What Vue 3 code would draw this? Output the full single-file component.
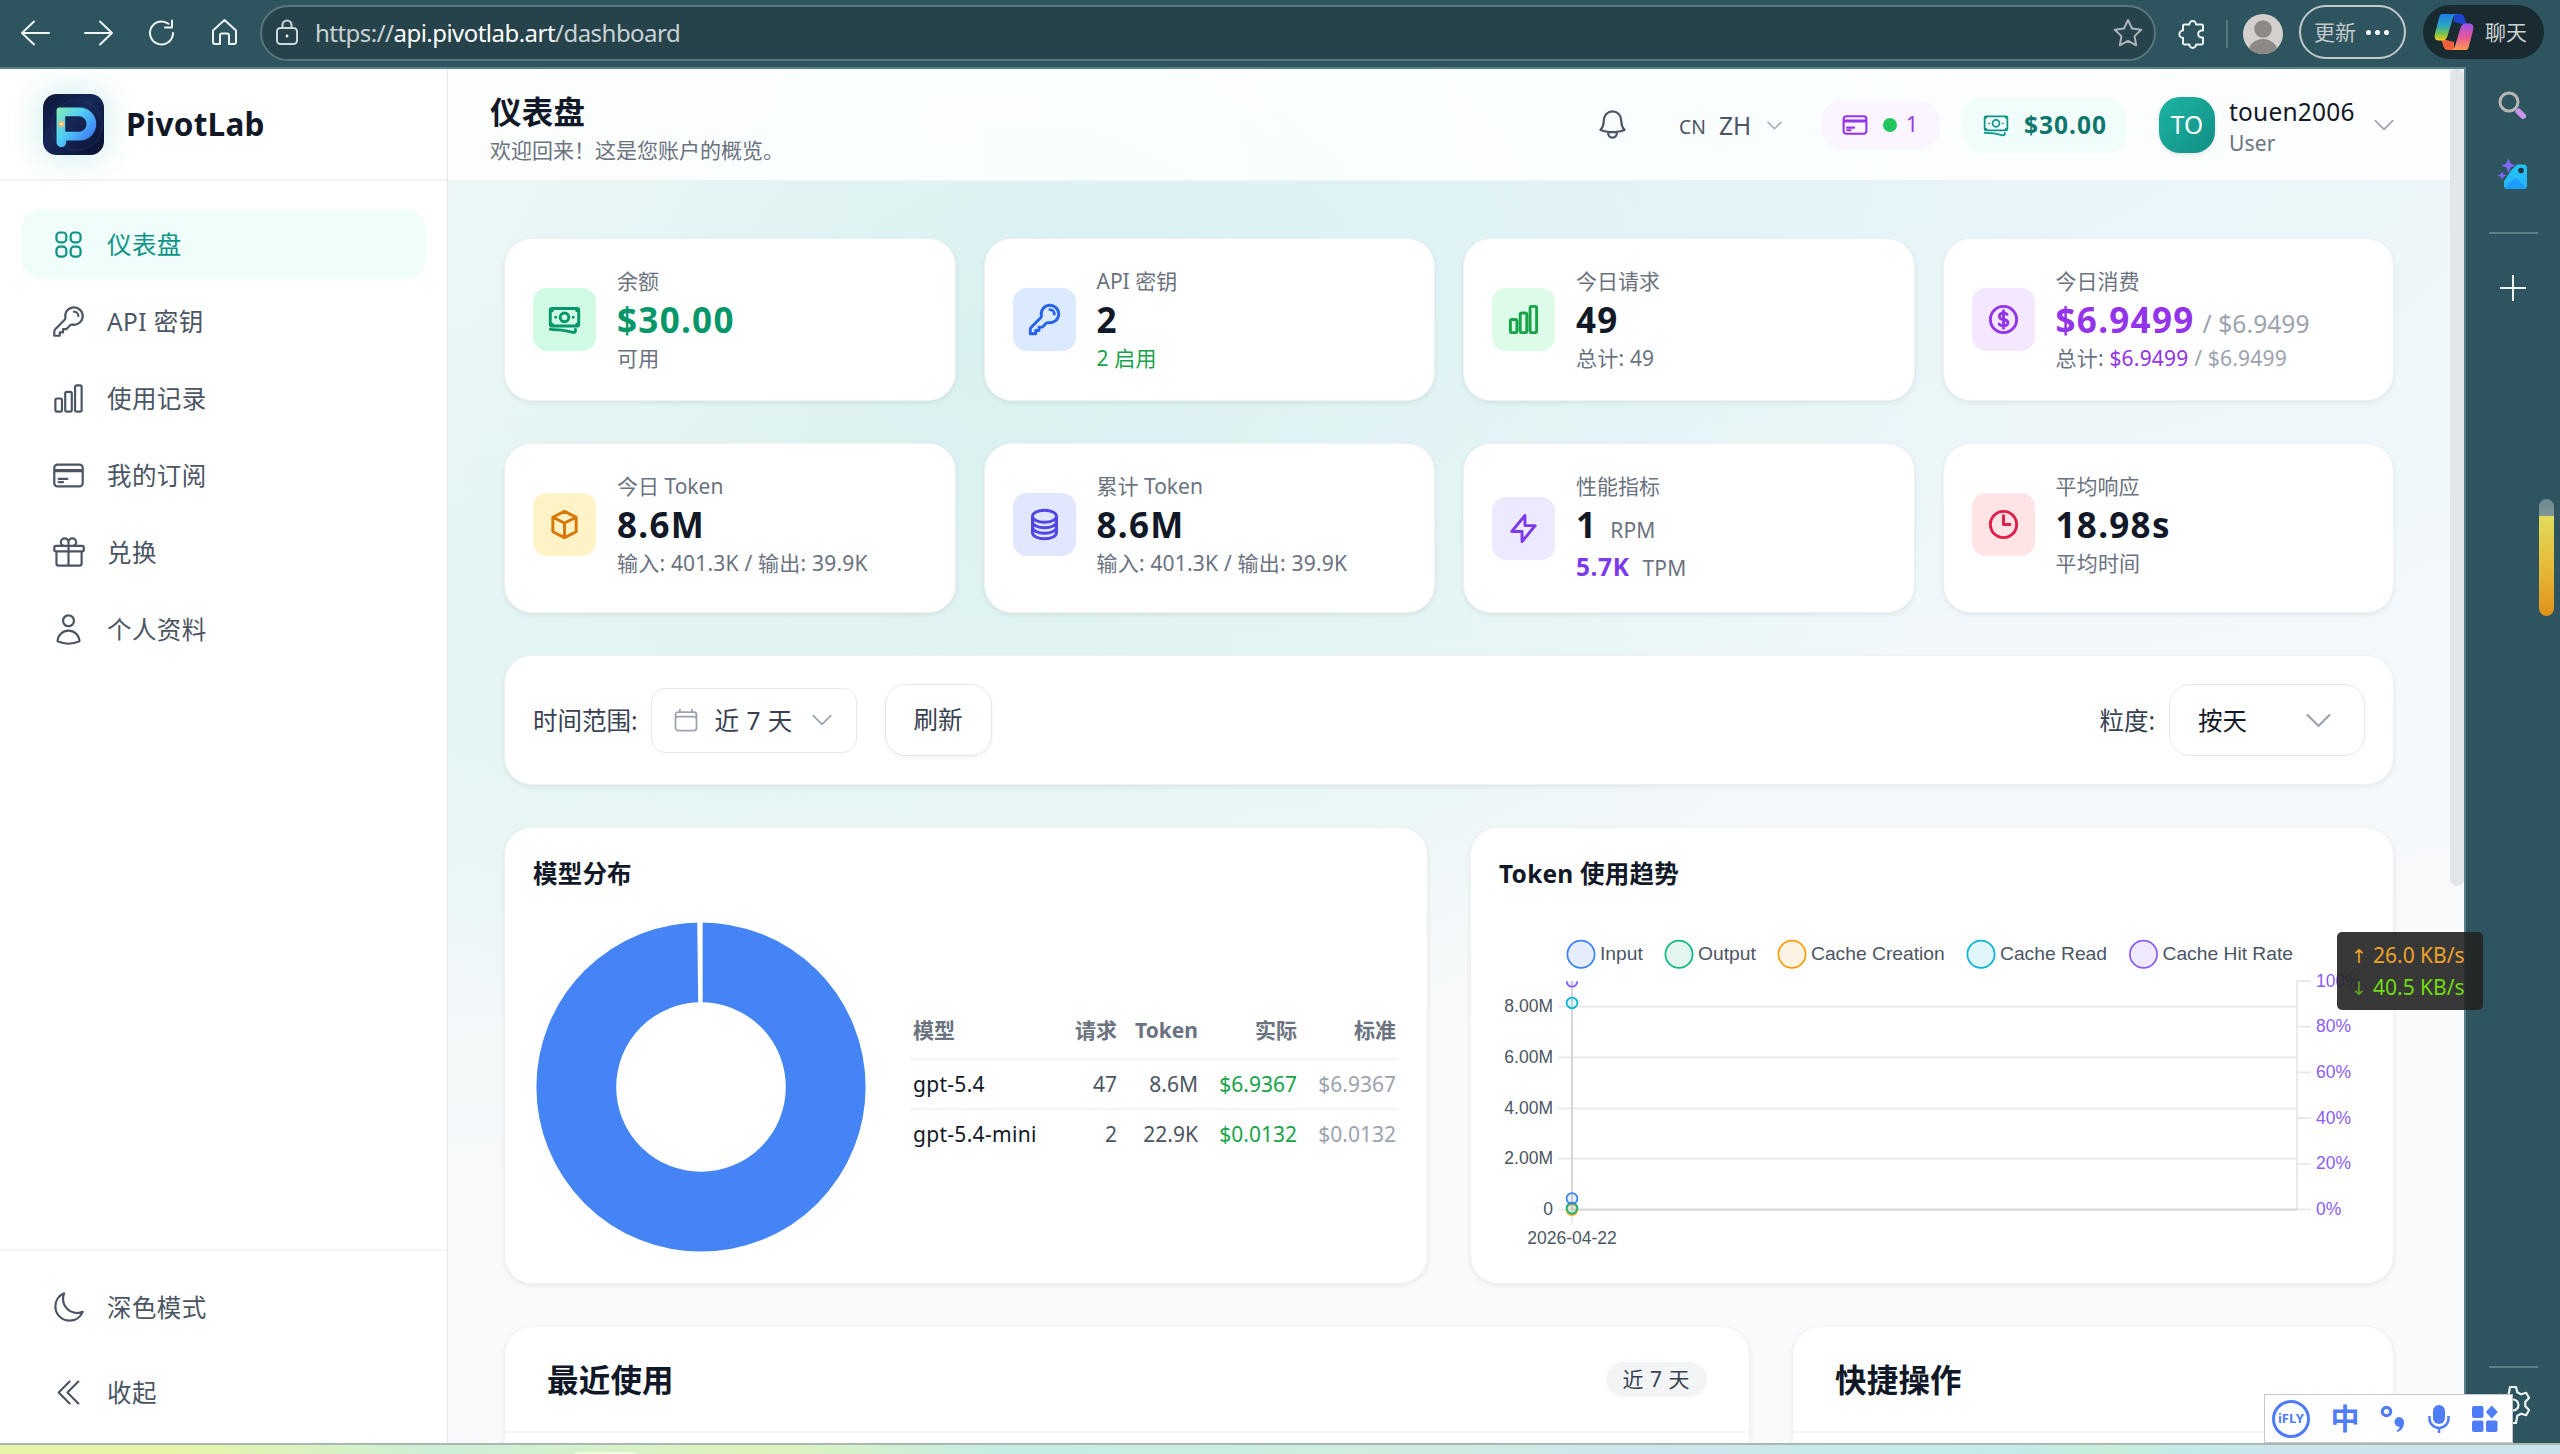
<script setup>
import { h } from 'vue'

const paths = {
  grid: 'M3.75 6A2.25 2.25 0 016 3.75h2.25A2.25 2.25 0 0110.5 6v2.25a2.25 2.25 0 01-2.25 2.25H6a2.25 2.25 0 01-2.25-2.25V6zM3.75 15.75A2.25 2.25 0 016 13.5h2.25a2.25 2.25 0 012.25 2.25V18a2.25 2.25 0 01-2.25 2.25H6A2.25 2.25 0 013.75 18v-2.25zM13.5 6a2.25 2.25 0 012.25-2.25H18A2.25 2.25 0 0120.25 6v2.25A2.25 2.25 0 0118 10.5h-2.25a2.25 2.25 0 01-2.25-2.25V6zM13.5 15.75a2.25 2.25 0 012.25-2.25H18a2.25 2.25 0 012.25 2.25V18A2.25 2.25 0 0118 20.25h-2.25A2.25 2.25 0 0113.5 18v-2.25z',
  key: 'M15.75 5.25a3 3 0 013 3m3 0a6 6 0 01-7.029 5.912c-.563-.097-1.159.026-1.563.43L10.5 17.25H8.25v2.25H6v2.25H2.25v-2.818c0-.597.237-1.17.659-1.591l6.499-6.499c.404-.404.527-1 .43-1.563A6 6 0 1121.75 8.25z',
  bars: 'M3 13.125C3 12.504 3.504 12 4.125 12h2.25c.621 0 1.125.504 1.125 1.125v6.75C7.5 20.496 6.996 21 6.375 21h-2.25A1.125 1.125 0 013 19.875v-6.75zM9.75 8.625c0-.621.504-1.125 1.125-1.125h2.25c.621 0 1.125.504 1.125 1.125v11.25c0 .621-.504 1.125-1.125 1.125h-2.25a1.125 1.125 0 01-1.125-1.125V8.625zM16.5 4.125c0-.621.504-1.125 1.125-1.125h2.25C20.496 3 21 3.504 21 4.125v15.75c0 .621-.504 1.125-1.125 1.125h-2.25a1.125 1.125 0 01-1.125-1.125V4.125z',
  card: 'M2.25 8.25h19.5M2.25 9h19.5m-16.5 5.25h6m-6 2.25h3m-3.75 3h15a2.25 2.25 0 002.25-2.25V6.75A2.25 2.25 0 0019.5 4.5h-15a2.25 2.25 0 00-2.25 2.25v10.5A2.25 2.25 0 004.5 19.5z',
  gift: 'M21 11.25v8.25a1.5 1.5 0 01-1.5 1.5H5.25a1.5 1.5 0 01-1.5-1.5v-8.25M12 4.875A2.625 2.625 0 109.375 7.5H12m0-2.625V7.5m0-2.625A2.625 2.625 0 1114.625 7.5H12m0 0V21m-8.625-9.75h18c.621 0 1.125-.504 1.125-1.125v-1.5c0-.621-.504-1.125-1.125-1.125h-18c-.621 0-1.125.504-1.125 1.125v1.5c0 .621.504 1.125 1.125 1.125z',
  user: 'M15.75 6a3.75 3.75 0 11-7.5 0 3.75 3.75 0 017.5 0zM4.501 20.118a7.5 7.5 0 0114.998 0A17.933 17.933 0 0112 21.75c-2.676 0-5.216-.584-7.499-1.632z',
  moon: 'M21.752 15.002A9.718 9.718 0 0118 15.75c-5.385 0-9.75-4.365-9.75-9.75 0-1.33.266-2.597.748-3.752A9.753 9.753 0 003 11.25C3 16.635 7.365 21 12.75 21a9.753 9.753 0 009.002-5.998z',
  collapse: 'M18.75 19.5l-7.5-7.5 7.5-7.5m-6 15L5.25 12l7.5-7.5',
  bell: 'M14.857 17.082a23.848 23.848 0 005.454-1.31A8.967 8.967 0 0118 9.75v-.7V9A6 6 0 006 9v.75a8.967 8.967 0 01-2.312 6.022c1.733.64 3.56 1.085 5.455 1.31m5.714 0a24.255 24.255 0 01-5.714 0m5.714 0a3 3 0 11-5.714 0',
  cash: 'M2.25 18.75a60.07 60.07 0 0115.797 2.101c.727.198 1.453-.342 1.453-1.096V18.75M3.75 4.5v.75A.75.75 0 013 6h-.75m0 0v-.375c0-.621.504-1.125 1.125-1.125H20.25M2.25 6v9m18-10.5v.75c0 .414.336.75.75.75h.75m-1.5-1.5h.375c.621 0 1.125.504 1.125 1.125v9.75c0 .621-.504 1.125-1.125 1.125h-.375m1.5-1.5H21a.75.75 0 00-.75.75v.75m0 0H3.75m0 0h-.375a1.125 1.125 0 01-1.125-1.125V15m1.5 1.5v-.75A.75.75 0 003 15h-.75M15 10.5a3 3 0 11-6 0 3 3 0 016 0zm3 0h.008v.008H18V10.5zm-12 0h.008v.008H6V10.5z',
  dollar: 'M12 6v12m-3-2.818l.879.659c1.171.879 3.07.879 4.242 0 1.172-.879 1.172-2.303 0-3.182C13.536 12.219 12.768 12 12 12c-.725 0-1.45-.22-2.003-.659-1.106-.879-1.106-2.303 0-3.182s2.9-.879 4.006 0l.415.33M21 12a9 9 0 11-18 0 9 9 0 0118 0z',
  cube: 'M20 7l-8-4-8 4m16 0l-8 4m8-4v10l-8 4m0-10L4 7m8 4v10M4 7v10l8 4',
  stack: 'M20.25 6.375c0 2.278-3.694 4.125-8.25 4.125S3.75 8.653 3.75 6.375m16.5 0c0-2.278-3.694-4.125-8.25-4.125S3.75 4.097 3.75 6.375m16.5 0v11.25c0 2.278-3.694 4.125-8.25 4.125s-8.25-1.847-8.25-4.125V6.375m16.5 0v3.75m-16.5-3.75v3.75m16.5 0v3.75C20.25 16.153 16.556 18 12 18s-8.25-1.847-8.25-4.125v-3.75m16.5 0c0 2.278-3.694 4.125-8.25 4.125s-8.25-1.847-8.25-4.125',
  bolt: 'M13 10V3L4 14h7v7l9-11h-7z',
  clock: 'M12 6v6h4.5m4.5 0a9 9 0 11-18 0 9 9 0 0118 0z',
  down: 'M19.5 8.25l-7.5 7.5-7.5-7.5',
  calendar: 'M6.75 3v2.25M17.25 3v2.25M3 18.75V7.5a2.25 2.25 0 012.25-2.25h13.5A2.25 2.25 0 0121 7.5v11.25m-18 0A2.25 2.25 0 005.25 21h13.5A2.25 2.25 0 0021 18.75m-18 0v-7.5A2.25 2.25 0 015.25 9h13.5A2.25 2.25 0 0121 11.25v7.5'
}

const Icon = (props) =>
  h('svg', {
    width: props.size || 35,
    height: props.size || 35,
    viewBox: '0 0 24 24',
    fill: 'none',
    stroke: 'currentColor',
    'stroke-width': props.weight || 1.5,
    'stroke-linecap': 'round',
    'stroke-linejoin': 'round'
  }, [h('path', { d: paths[props.name] })])
Icon.props = ['name', 'size', 'weight']

const nav = [
  { icon: 'grid', label: '仪表盘', active: true },
  { icon: 'key', label: 'API 密钥' },
  { icon: 'bars', label: '使用记录' },
  { icon: 'card', label: '我的订阅' },
  { icon: 'gift', label: '兑换' },
  { icon: 'user', label: '个人资料' }
]

const stats = [
  { icon: 'cash', tone: 'emerald', label: '余额', value: '$30.00', valueTone: 'v-emerald', sub: '可用' },
  { icon: 'key', tone: 'blue', label: 'API 密钥', value: '2', sub: '2 启用', subTone: 's-green' },
  { icon: 'bars', tone: 'green', label: '今日请求', value: '49', sub: '总计: 49' },
  { icon: 'dollar', tone: 'purple', label: '今日消费', value: '$6.9499', valueTone: 'v-purple', aside: '/ $6.9499', sub: '总计: ', cost: '$6.9499', costAside: ' / $6.9499' },
  { icon: 'cube', tone: 'amber', label: '今日 Token', value: '8.6M', sub: '输入: 401.3K / 输出: 39.9K' },
  { icon: 'stack', tone: 'indigo', label: '累计 Token', value: '8.6M', sub: '输入: 401.3K / 输出: 39.9K' },
  { icon: 'bolt', tone: 'violet', label: '性能指标', value: '1', unit: 'RPM', value2: '5.7K', unit2: 'TPM' },
  { icon: 'clock', tone: 'rose', label: '平均响应', value: '18.98s', sub: '平均时间' }
]

const models = [
  { name: 'gpt-5.4', req: '47', token: '8.6M', actual: '$6.9367', std: '$6.9367' },
  { name: 'gpt-5.4-mini', req: '2', token: '22.9K', actual: '$0.0132', std: '$0.0132' }
]

const legend = [
  { x: 82, label: 'Input', stroke: '#3b82f6', fill: '#e6eefd' },
  { x: 180, label: 'Output', stroke: '#10b981', fill: '#e2f5ee' },
  { x: 293, label: 'Cache Creation', stroke: '#f59e0b', fill: '#fef2e4' },
  { x: 482, label: 'Cache Read', stroke: '#06b6d4', fill: '#e1f6fa' },
  { x: 644.5, label: 'Cache Hit Rate', stroke: '#8b5cf6', fill: '#f0eafe' }
]
const yTicks = [['8.00M', 107], ['6.00M', 157.8], ['4.00M', 208.8], ['2.00M', 259.2], ['0', 310]]
const pctTicks = ['100%', '80%', '60%', '40%', '20%', '0%'].map((t, i) => [t, 81.5 + i * 45.7])
</script>

<template>
  <div class="desktop">
    <header class="toolbar">
      <svg class="nav-icons" width="260" height="67" viewBox="0 0 260 67" fill="none" stroke="#eef3f4" stroke-width="2" stroke-linecap="round" stroke-linejoin="round">
        <path d="M49 33H22M34 21.500L22 33l12 11.500" />
        <path d="M85 33h27M100 21.500L112 33l-12 11.500" />
        <path d="M173 33a11.500 11.500 0 1 1-4.500-9.200M172 20.500v7h-7" />
        <path d="M213 30.500L224.500 20 236 30.500V42a2 2 0 0 1-2 2h-5v-8.500a2 2 0 0 0-2-2h-5a2 2 0 0 0-2 2V44h-5a2 2 0 0 1-2-2z" />
      </svg>
      <div class="address">
        <svg width="24" height="28" viewBox="0 0 24 28" fill="none" stroke="#cdd6d8" stroke-width="2">
          <rect x="2" y="9" width="20" height="16" rx="3.500" /><path d="M7.500 9V6a4.500 4.500 0 0 1 9 0v3" /><circle cx="12" cy="17" r="1.400" fill="#fff" stroke="none" />
        </svg>
        <span class="url">https://<b>api.pivotlab.art</b>/dashboard</span>
        <svg class="star" width="30" height="30" viewBox="0 0 30 30" fill="none" stroke="#a9b5b8" stroke-width="2" stroke-linejoin="round"><path d="M15 2l4 8.500 9.200 1.200-6.700 6.400 1.700 9.200L15 22.800l-8.200 4.500 1.700-9.200L1.800 11.700 11 10.500z" /></svg>
      </div>
      <svg class="puzzle" width="30" height="32" viewBox="0 0 30 32" fill="none" stroke="#eef3f4" stroke-width="2" stroke-linejoin="round"><path d="M7.500 6.500h4.800a3.400 3.400 0 0 1 6.800 0h5.400a1.500 1.500 0 0 1 1.500 1.500v4.500h-1.300a3.500 3.500 0 0 0 0 7H26V25a1.500 1.500 0 0 1-1.500 1.500h-5.400a3.400 3.400 0 0 1-6.800 0H7.500A1.500 1.500 0 0 1 6 25v-5.200a3.600 3.600 0 0 1 0-7.200V8a1.500 1.500 0 0 1 1.500-1.500z" /></svg>
      <i class="tool-divider"></i>
      <svg class="person" width="40" height="40" viewBox="0 0 40 40">
        <defs><clipPath id="person-clip"><circle cx="20" cy="20" r="20" /></clipPath></defs>
        <g clip-path="url(#person-clip)"><rect width="40" height="40" fill="#d4d0ce" /><circle cx="20" cy="15" r="8.800" fill="#8c8987" /><ellipse cx="20" cy="38" rx="14.500" ry="13" fill="#8c8987" /></g>
      </svg>
      <div class="update"><span>更新</span><i></i><i></i><i></i></div>
      <div class="chat">
        <svg width="40" height="38" viewBox="0 0 40 38">
          <defs>
            <linearGradient id="cop-a" x1="0" y1="0" x2="0" y2="1"><stop offset="0" stop-color="#1f7ee8" /><stop offset=".45" stop-color="#2ba6c0" /><stop offset=".75" stop-color="#7cc24a" /><stop offset="1" stop-color="#f4d020" /></linearGradient>
            <linearGradient id="cop-b" x1="0" y1="0" x2="0" y2="1"><stop offset="0" stop-color="#9a55e8" /><stop offset=".5" stop-color="#e5559c" /><stop offset="1" stop-color="#ff9a4a" /></linearGradient>
          </defs>
          <path d="M20 1h6c3 0 4 2 5 5l1.500 5H28l-8-2z" fill="#1c44cf" />
          <path d="M20 37h-6c-3 0-4-2-5-5l-1.500-5H12l8 2z" fill="#f0603c" />
          <path d="M8 1h14.500c-2.500 1-3.300 3-4 5.500L13.500 23c-1 3-2.500 4.500-5 4.500H4.500c-3.500 0-4.500-3-3.500-7L4.500 7C5.500 3 6 1 8 1z" fill="url(#cop-a)" />
          <path d="M32 37H17.500c2.500-1 3.300-3 4-5.500L26.500 15c1-3 2.500-4.500 5-4.500h4c3.500 0 4.500 3 3.500 7L35.500 31c-1 4-1.500 6-3.500 6z" fill="url(#cop-b)" />
        </svg>
        <span>聊天</span>
      </div>
    </header>

    <div class="body">
      <div class="page">
        <aside class="sidebar">
          <div class="brand">
            <div class="logo">
              <svg width="61" height="61" viewBox="0 0 63 63">
                <defs>
                  <linearGradient id="logo-bg" x1="0" y1="0" x2="1" y2="1"><stop offset="0" stop-color="#0d1638" /><stop offset=".45" stop-color="#162857" /><stop offset="1" stop-color="#0a1030" /></linearGradient>
                  <linearGradient id="logo-p" x1="0" y1="0" x2="1" y2=".8"><stop offset="0" stop-color="#86efb4" /><stop offset=".45" stop-color="#50cdf5" /><stop offset="1" stop-color="#3b6cf6" /></linearGradient>
                </defs>
                <rect width="63" height="63" rx="14" fill="url(#logo-bg)" />
                <circle cx="35" cy="32" r="26" fill="none" stroke="#2a4278" stroke-opacity=".45" />
                <path d="M17 14h21a16.500 16.500 0 0 1 0 34H24v2a5 5 0 0 1-10 0V17a3 3 0 0 1 3-3zm6 9v16h14a8 8 0 0 0 0-16z" fill="url(#logo-p)" fill-rule="evenodd" />
                <circle cx="19" cy="31" r="3.200" fill="#f5b464" /><circle cx="19" cy="31" r="1.400" fill="#fff3d8" />
              </svg>
            </div>
            <span class="brand-name">PivotLab</span>
          </div>
          <nav class="nav">
            <a v-for="n in nav" :key="n.label" :class="['nav-item', { active: n.active }]"><Icon :name="n.icon" /><span>{{ n.label }}</span></a>
          </nav>
          <div class="side-foot">
            <a class="nav-item"><Icon name="moon" /><span>深色模式</span></a>
            <a class="nav-item"><Icon name="collapse" /><span>收起</span></a>
          </div>
        </aside>

        <main class="main">
          <div class="topbar">
            <div class="heading">
              <h1>仪表盘</h1>
              <p>欢迎回来！这是您账户的概览。</p>
            </div>
            <Icon class="bell" name="bell" />
            <div class="lang"><small>CN</small><span>ZH</span><Icon name="down" size="21" /></div>
            <div class="pill subs"><Icon name="card" size="28" weight="1.800" /><i class="dot"></i><span>1</span></div>
            <div class="pill funds"><Icon name="cash" size="28" /><span>$30.00</span></div>
            <div class="profile">
              <div class="avatar">TO</div>
              <div class="who"><span>touen2006</span><small>User</small></div>
              <Icon name="down" size="28" />
            </div>
          </div>

          <div class="content">
            <section class="stats">
              <div v-for="s in stats" :key="s.label" class="card stat">
                <div class="stat-row">
                  <div :class="['tile', s.tone]"><Icon :name="s.icon" weight="2" /></div>
                  <div>
                    <div class="label">{{ s.label }}</div>
                    <div :class="['value', s.valueTone]">{{ s.value }}<span v-if="s.aside" class="aside">{{ s.aside }}</span><span v-if="s.unit" class="unit">{{ s.unit }}</span></div>
                    <div v-if="s.value2" class="value2">{{ s.value2 }}<span class="unit">{{ s.unit2 }}</span></div>
                    <div v-else :class="['sub', s.subTone]">{{ s.sub }}<span class="cost">{{ s.cost }}</span><span class="muted">{{ s.costAside }}</span></div>
                  </div>
                </div>
              </div>
            </section>

            <section class="card controls">
              <span class="ctl-label">时间范围:</span>
              <div class="picker"><Icon name="calendar" size="28" /><span>近 7 天</span><Icon name="down" size="28" /></div>
              <div class="refresh">刷新</div>
              <span class="ctl-label push">粒度:</span>
              <div class="select"><span>按天</span><Icon name="down" /></div>
            </section>

            <section class="charts">
              <div class="card chart">
                <h3>模型分布</h3>
                <div class="split">
                  <svg width="336" height="336" viewBox="0 0 336 336">
                    <circle cx="168" cy="168" r="124.700" fill="none" stroke="#4484f4" stroke-width="79.800" />
                    <path d="M164.200 0h5.400v84h-4.400z" fill="#fff" />
                  </svg>
                  <table>
                    <thead><tr><th>模型</th><th>请求</th><th>Token</th><th>实际</th><th>标准</th></tr></thead>
                    <tbody>
                      <tr v-for="m in models" :key="m.name"><td>{{ m.name }}</td><td>{{ m.req }}</td><td>{{ m.token }}</td><td>{{ m.actual }}</td><td>{{ m.std }}</td></tr>
                    </tbody>
                  </table>
                </div>
              </div>
              <div class="card chart">
                <h3>Token 使用趋势</h3>
                <svg class="plot" width="866" height="336" viewBox="0 19.500 866 336">
                  <g v-for="l in legend" :key="l.label">
                    <circle :cx="l.x" cy="54.700" r="13.600" :fill="l.fill" :stroke="l.stroke" stroke-width="1.750" />
                    <text :x="l.x + 19" y="60.700" font-size="19.250" fill="#4b5563">{{ l.label }}</text>
                  </g>
                  <g v-for="t in yTicks" :key="t[0]">
                    <path :d="`M59 ${t[1]}H798`" stroke="#e5e7eb" stroke-width="1.750" />
                    <text x="54" :y="t[1] + 5.500" font-size="17.500" text-anchor="end" fill="#4b5563">{{ t[0] }}</text>
                  </g>
                  <path d="M798 81v229" stroke="#e5e7eb" stroke-width="1.750" />
                  <g v-for="t in pctTicks" :key="t[0]">
                    <path :d="`M798 ${t[1]}h14`" stroke="#e5e7eb" stroke-width="1.750" />
                    <text x="817" :y="t[1] + 5.500" font-size="17.500" fill="#8b5cf6">{{ t[0] }}</text>
                  </g>
                  <path d="M73 81.500V310H798" stroke="#d0d2d7" stroke-width="1.750" fill="none" />
                  <path d="M73 310v14" stroke="#e5e7eb" stroke-width="1.750" />
                  <g stroke-width="1.750" fill-opacity=".12">
                    <circle cx="73" cy="310" r="5.400" stroke="#f59e0b" fill="#f59e0b" />
                    <circle cx="73" cy="308.600" r="5.400" stroke="#10b981" fill="#10b981" />
                    <circle cx="73" cy="299" r="5.400" stroke="#3b82f6" fill="#3b82f6" />
                    <circle cx="73" cy="103.400" r="5.400" stroke="#06b6d4" fill="#06b6d4" />
                    <path d="M67.600 81.700a5.400 5.400 0 0 0 10.800 0" stroke="#8b5cf6" fill="#8b5cf6" />
                  </g>
                  <text x="73" y="344" font-size="17.500" text-anchor="middle" fill="#4b5563">2026-04-22</text>
                </svg>
              </div>
            </section>

            <section class="bottom">
              <div class="card panel"><div class="panel-head"><h2>最近使用</h2><span class="badge">近 7 天</span></div></div>
              <div class="card panel"><div class="panel-head"><h2>快捷操作</h2></div></div>
            </section>
          </div>
        </main>
        <div class="scroll-thumb"></div>
      </div>

      <aside class="rail">
        <svg width="34" height="34" viewBox="0 0 34 34"><path d="M22.500 22.500l4.500 4.500" stroke="#c896ee" stroke-width="6" stroke-linecap="round" /><circle cx="13" cy="13" r="9" fill="none" stroke="#b9b7b5" stroke-width="3" /></svg>
        <svg class="visual" width="34" height="34" viewBox="0 0 34 34">
          <defs><linearGradient id="tag" x1="0" y1="0" x2="0" y2="1"><stop offset="0" stop-color="#22c4f8" /><stop offset="1" stop-color="#27b4fa" /></linearGradient></defs>
          <path d="M21 7.500h6.500a3.500 3.500 0 0 1 3.500 3.500v17.500a3.500 3.500 0 0 1-3.500 3.500h-16A3.500 3.500 0 0 1 8 28.500V24l7.500-11z" fill="url(#tag)" /><path d="M9 30.500l9-8.500a2.500 2.500 0 0 1 3.300 0l8.700 8.500a3.500 3.500 0 0 1-2.500 1.500h-16a3.500 3.500 0 0 1-2.500-1.500z" fill="#1e9cff" /><circle cx="25" cy="13.500" r="2.800" fill="#263238" />
          <path d="M12.500 1.500l2 5 5 2-5 2-2 5.500-2-5.500-5-2 5-2zM6 14l1.200 3.300L10.500 18.500 7.200 19.700 6 23l-1.200-3.300-3.300-1.200 3.300-1.200z" fill="#8468fa" />
        </svg>
        <i class="rail-line"></i>
        <svg class="plus" width="30" height="30" viewBox="0 0 30 30" stroke="#eef3f4" stroke-width="2"><path d="M15 2v26M2 15h26" /></svg>
        <i class="rail-line low"></i>
        <svg class="gear" width="40" height="40" viewBox="0 0 40 40" fill="none" stroke="#eef3f4" stroke-width="2.200" stroke-linejoin="round"><path d="M17 2h6l1.300 5.200 3.700 2.100 5.100-1.500 3 5.200-3.800 3.700v4.600l3.800 3.700-3 5.200-5.100-1.500-3.700 2.100L23 38h-6l-1.300-5.200-3.700-2.100-5.100 1.500-3-5.200 3.800-3.700v-4.600L3.900 15l3-5.200 5.100 1.500 3.700-2.100z" /><circle cx="20" cy="20" r="5.500" /></svg>
      </aside>
    </div>
    <footer class="taskbar"><i></i></footer>

    <div class="netspeed">
      <div class="up"><span>↑</span>26.0 KB/s</div>
      <div class="dn"><span>↓</span>40.5 KB/s</div>
    </div>
    <div class="gauge"></div>
    <div class="ime">
      <div class="ifly">iFLY</div>
      <span class="zh">中</span>
      <svg width="26" height="28" viewBox="0 0 26 28" fill="#4f7cf7"><circle cx="6.500" cy="6.500" r="4.200" fill="none" stroke="#4f7cf7" stroke-width="3.200" /><path d="M19 12a5 5 0 0 1 5 5.500c0 5-2.500 8-6.500 9.500l-1-1.500c2-1 3-2.200 3.200-3.700A4.900 4.900 0 0 1 19 12z" /></svg>
      <svg width="24" height="30" viewBox="0 0 24 30"><rect x="6" y="1" width="12" height="19" rx="6" fill="#4f7cf7" /><path d="M2.500 12v2.500a9.500 9.500 0 0 0 19 0V12M12 24v5" fill="none" stroke="#4f7cf7" stroke-width="2.500" /></svg>
      <svg width="28" height="28" viewBox="0 0 28 28" fill="#4f7cf7"><rect x="1" y="1" width="11.500" height="12" rx="2" /><rect x="1" y="15.500" width="11.500" height="11.500" rx="2" /><rect x="15" y="15.500" width="11.500" height="11.500" rx="2" /><path d="M20.800.5l6 6.500-6 6.500-6-6.500z" /></svg>
    </div>
  </div>
</template>

<style>
html, body { margin: 0; overflow: hidden; background: #2d545f; }
</style>

<style scoped>
* { box-sizing: border-box; }
.desktop { position: relative; width: 2560px; height: 1454px; display: flex; flex-direction: column; overflow: hidden; background: #2d545f; font-family: "Noto Sans", "Noto Sans CJK SC", sans-serif; font-size: 24.5px; line-height: 35px; white-space: nowrap; color: #111827; }
h1, h2, h3, p { margin: 0; }
svg { display: block; flex: none; }

.toolbar { height: 69px; flex: none; display: flex; align-items: center; padding-bottom: 2px; background: linear-gradient(#5a7f88, #5a7f88) left bottom / 2466px 2px no-repeat #2d545f; }
.address { width: 1896px; height: 56px; margin-top: -2px; display: flex; align-items: center; padding: 0 11px 0 13px; border: 2px solid #5a757c; border-radius: 28px; background: #26434b; }
.url { margin-left: 16px; color: #c9d2d4; font-size: 24px; letter-spacing: -.53px; }
.url b { font-weight: 400; color: #fff; }
.star { margin-left: auto; }
.puzzle { margin-left: 21px; }
.tool-divider { width: 2px; height: 28px; margin-left: 19px; background: #587780; }
.person { margin-left: 15px; }
.update { width: 107px; height: 54px; margin: -3px 0 0 16px; display: flex; align-items: center; padding-left: 13px; border: 2px solid #c3c8ca; border-radius: 27px; color: #c3c8ca; font-size: 21px; }
.update i { width: 5px; height: 5px; margin-left: 4px; border-radius: 50%; background: #fff; }
.update span + i { margin-left: 10px; }
.chat { width: 121px; height: 54px; margin: -3px 0 0 17px; display: flex; align-items: center; gap: 11px; padding-left: 11px; border-radius: 27px; background: #192b31; color: #cdd2d4; font-size: 21px; }

.body { height: 1374px; flex: none; display: flex; }
.page { position: relative; width: 2466px; display: flex; overflow: hidden; border-right: 2px solid #5a7f88; background-color: #f9fafc; background-image: radial-gradient(at 40% 20%, rgba(20, 184, 166, .12) 0, transparent 50%), radial-gradient(at 80% 0%, rgba(6, 182, 212, .08) 0, transparent 50%), radial-gradient(at 0% 50%, rgba(20, 184, 166, .07) 0, transparent 50%); }
.scroll-thumb { position: absolute; top: 0; right: 0; width: 14px; height: 817px; border-radius: 7px; background: #e3e6e9; }

.sidebar { width: 448px; flex: none; display: flex; flex-direction: column; border-right: 1px solid #e5e7eb; background: #fff; }
.brand { height: 112px; flex: none; display: flex; align-items: center; gap: 22px; padding: 0 43px; border-bottom: 2px solid #f3f4f6; }
.logo { border-radius: 14px; box-shadow: 0 0 35px rgba(20, 184, 166, .25); }
.brand-name { margin-top: -2px; font-size: 31.500px; font-weight: 700; letter-spacing: .25px; }
.nav { display: flex; flex-direction: column; gap: 7px; padding: 28px 21px; }
.nav-item { height: 70px; display: flex; align-items: center; gap: 21px; padding: 0 0 0 30px; border-radius: 21px; color: #4b5563; letter-spacing: .4px; }
.nav-item.active { background: #f0fdfa; color: #0d9488; }
.side-foot { height: 194px; margin-top: auto; display: flex; flex-direction: column; gap: 15px; padding: 21px 21px 0; border-top: 2px solid #f3f4f6; }

.main { width: 2002px; flex: none; }
.topbar { height: 112px; display: flex; align-items: center; padding: 0 52px 0 42px; background: rgba(255, 255, 255, .85); border-bottom: 1px solid #eef2f4; color: #4b5563; }
.heading { width: 300px; margin: 1px 805px 0 0; }
h1 { font-size: 31.500px; line-height: 49px; color: #111827; letter-spacing: .3px; }
.heading p { font-size: 21px; line-height: 28px; color: #6b7280; }
.lang { display: flex; align-items: center; margin: 1px 0 0 49px; }
.lang small { font-size: 19.250px; padding-top: 3px; margin-right: 12px; width: 28px; }
.lang span { width: 45px; }
.lang svg, .profile > svg { color: #9ca3af; }
.pill { display: flex; align-items: center; border-radius: 21px; }
.subs { width: 119px; height: 49px; margin-left: 36px; padding-left: 20px; background: #faf5ff; color: #9333ea; font-size: 21px; }
.dot { width: 14px; height: 14px; margin: 0 9px 0 14px; border-radius: 50%; background: #22c55e; }
.funds { width: 165px; height: 56px; margin-left: 22px; padding-left: 20px; background: #f0fdfa; color: #0d9488; }
.funds span { margin-left: 14px; font-weight: 700; letter-spacing: 1px; color: #0f766e; }
.profile { display: flex; align-items: center; margin-left: auto; }
.avatar { width: 56px; height: 56px; border-radius: 21px; line-height: 56px; text-align: center; color: #fff; background: linear-gradient(135deg, #1cb5a4, #128f83); box-shadow: 0 2px 4px rgba(0, 0, 0, .1); }
.who { width: 141px; margin-left: 14px; padding-top: 1px; display: flex; flex-direction: column; color: #111827; letter-spacing: .2px; }
.who small { font-size: 21px; line-height: 28px; color: #6b7280; }

.content { display: flex; flex-direction: column; gap: 42px; padding: 57px 56px; }
.card { border: 1px solid #eff2f4; border-radius: 28px; background: #fff; box-shadow: 0 2px 5px rgba(0, 0, 0, .07); }
.stats { display: grid; grid-template-columns: repeat(4, 1fr); gap: 42px 28px; }
.stat { padding: 28px; }
.stat-row { display: flex; align-items: center; gap: 21px; }
.stats .stat:nth-child(-n+4) { height: 163px; }
.stats .stat:nth-child(n+5) { height: 170px; }
.tile { width: 63px; height: 63px; display: grid; place-items: center; border-radius: 14px; }
.emerald { background: #d1fae5; color: #059669; }
.blue { background: #dbeafe; color: #2563eb; }
.green { background: #dcfce7; color: #16a34a; }
.purple { background: #f3e8ff; color: #9333ea; }
.amber { background: #fef3c7; color: #d97706; }
.indigo { background: #e0e7ff; color: #4f46e5; }
.violet { background: #ede9fe; color: #7c3aed; }
.rose { background: #ffe4e6; color: #e11d48; }
.label, .sub { font-size: 21px; line-height: 28px; color: #6b7280; }
.sub { white-space: pre; letter-spacing: .2px; }
.value { height: 49px; font-size: 35px; line-height: 49px; font-weight: 700; letter-spacing: 1.3px; }
.v-emerald { color: #059669; }
.v-purple { color: #9333ea; }
.s-green { color: #16a34a; }
.cost { color: #9333ea; }
.muted { color: #9ca3af; }
.aside { margin-left: 8px; font-size: 24.500px; line-height: 1; letter-spacing: .1px; font-weight: 400; color: #9ca3af; }
.unit { margin-left: 13px; font-size: 21px; line-height: 1; letter-spacing: .1px; font-weight: 400; color: #6b7280; }
.value2 { height: 35px; line-height: 35px; font-weight: 700; letter-spacing: .6px; color: #7c3aed; }

.controls { height: 130px; display: flex; align-items: center; padding: 0 28px; color: #374151; }
.picker { width: 206px; height: 65px; margin-left: 13px; display: flex; align-items: center; padding-left: 20px; border: 1px solid #e5e7eb; border-radius: 14px; }
.picker span { width: 81px; margin: 0 12px 0 15px; letter-spacing: .5px; }
.picker svg, .select svg { color: #9ca3af; }
.refresh { width: 107px; height: 72px; margin-left: 28px; line-height: 70px; text-align: center; border: 1px solid #e5e7eb; border-radius: 21px; box-shadow: 0 2px 4px rgba(0, 0, 0, .05); }
.push { margin-left: auto; }
.select { width: 196px; height: 72px; margin-left: 14px; display: flex; align-items: center; justify-content: space-between; padding: 0 28px; border: 1px solid #e5e7eb; border-radius: 21px; color: #111827; }

.charts { display: grid; grid-template-columns: 924px 924px; gap: 42px; }
.chart { height: 457px; padding: 28px; }
h3 { font-size: 24.500px; line-height: 35px; letter-spacing: .2px; }
.split { display: flex; align-items: center; gap: 41px; margin-top: 28px; }
table { width: 489px; border-collapse: collapse; font-size: 21px; line-height: 28px; color: #4b5563; table-layout: fixed; }
th, td { padding: 11px 3px; text-align: right; }
th { padding: 0 3px 14px; font-weight: 700; color: #6b7280; }
td { border-top: 2px solid #f3f4f6; padding: 10px 3px; }
th:first-child, td:first-child { width: 150px; text-align: left; }
th:nth-child(2) { width: 60px; }
th:nth-child(3) { width: 81px; }
th:nth-child(4) { width: 99px; }
td:first-child { color: #111827; letter-spacing: .3px; }
td:nth-child(4) { color: #16a34a; }
td:nth-child(5) { color: #9ca3af; }
.plot { margin-top: 28px; font-family: "Liberation Sans", Arial, sans-serif; }

.bottom { display: grid; grid-template-columns: 1246px 602px; gap: 42px; }
.panel { height: 400px; }
.panel-head { height: 106px; display: flex; align-items: center; justify-content: space-between; padding: 0 42px; border-bottom: 2px solid #f3f4f6; }
h2 { font-size: 31.500px; line-height: 49px; letter-spacing: .2px; }
.badge { height: 35px; padding: 0 17px; border-radius: 18px; background: #f3f4f6; font-size: 21px; line-height: 35px; letter-spacing: .5px; color: #374151; }

.rail { width: 94px; display: flex; flex-direction: column; align-items: center; padding-top: 20px; }
.visual { margin-top: 34px; }
.rail-line { width: 49px; height: 2px; margin-top: 41px; background: #5f7f87; }
.plus { margin-top: 39px; }
.rail-line.low { margin-top: auto; }
.gear { margin: 17px 0 18px; }

.taskbar { flex: 1; display: flex; padding: 7px 0 0 573px; border-top: 2px solid #a9b8b0; background: linear-gradient(90deg, #e6f5a8 0, #e6f5a8 180px, #cdeed8 440px, #def3bb 760px, #c5ece6 1010px, #cfeedd 1350px, #cfe6ec 1620px, #c2ebe8 2030px, #c9eed8 2110px, #c2ebe8 2180px, #cde4ec 2290px, #c8e4ea 2560px); }
.taskbar i { width: 64px; height: 10px; border-radius: 5px; background: #f2fadf; }

.netspeed { position: absolute; left: 2337px; top: 932px; width: 146px; height: 78px; padding: 7px 0 0 14px; border-radius: 5px; background: rgba(36, 36, 36, .91); font-size: 21px; line-height: 32px; }
.netspeed span { display: inline-block; width: 22px; line-height: 1; font-family: "DejaVu Sans", sans-serif; font-size: 19px; }
.up { color: #f0a32a; }
.dn { color: #70dc10; }
.dn span { color: #5fa022; }
.gauge { position: absolute; left: 2539px; top: 499px; width: 15px; height: 117px; border-radius: 8px; background: linear-gradient(#6b878e 0, #81969a 17px, #e2dc5a 17px, #e6b838 60%, #e0911a 100%); }
.ime { position: absolute; left: 2264px; top: 1394px; width: 249px; height: 49px; display: flex; align-items: center; gap: 20.5px; padding-left: 7px; border: 1px solid #c4c8ca; background: #fff; color: #4f7cf7; }
.ifly { width: 38px; height: 38px; border: 3px solid #4f7cf7; border-radius: 50%; font: 700 13px/31px "Noto Sans", sans-serif; text-align: center; }
.zh { font-size: 29px; font-weight: 700; }
</style>
